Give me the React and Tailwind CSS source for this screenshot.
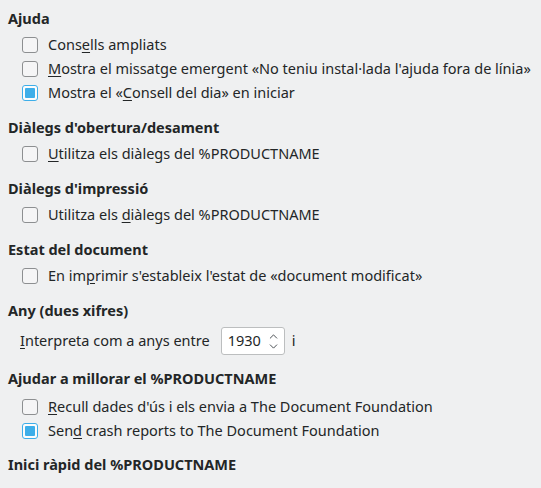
import { ChevronUp, ChevronDown } from "lucide-react";

const FONT = { fontFamily: '"Noto Sans", "DejaVu Sans", sans-serif' };

// label text with an optional underlined mnemonic letter
const Label = ({ text, u }) => {
  if (u == null) return <span>{text}</span>;
  return (
    <span>
      {text.slice(0, u)}
      <span className="underline underline-offset-2">{text[u]}</span>
      {text.slice(u + 1)}
    </span>
  );
};

const Check = ({ label, u, checked }) => (
  <div className="flex items-center h-6 pl-[14px]">
    {checked ? (
      <span className="flex items-center justify-center w-4 h-4 rounded-[3px] border border-[#3daee9] bg-[#fcfcfc]">
        <span className="w-[10px] h-[10px] rounded-[1px] bg-[#3daee9]" />
      </span>
    ) : (
      <span className="w-4 h-4 rounded-[3px] border border-[#8d8f91] bg-[#f5f5f6]" />
    )}
    <span className="ml-[10px]">
      <Label text={label} u={u} />
    </span>
  </div>
);

const Section = ({ title, children, className = "" }) => (
  <section className={`flex flex-col ${className}`}>
    <h2 className="h-5 leading-5 font-bold">{title}</h2>
    <div className="flex flex-col mt-[5px]">{children}</div>
  </section>
);

export default function App() {
  return (
    <div
      style={FONT}
      className="w-[541px] h-[488px] overflow-hidden bg-[#eff0f1] text-[#232627] text-[14.5px] px-2 pt-2 flex flex-col gap-3"
    >
      <Section title="Ajuda">
        <Check label="Consells ampliats" u={4} />
        <Check label="Mostra el missatge emergent «No teniu instal·lada l'ajuda fora de línia»" u={0} />
        <Check label="Mostra el «Consell del dia» en iniciar" checked u={11} />
      </Section>

      <Section title="Diàlegs d'obertura/desament">
        <Check label="Utilitza els diàlegs del %PRODUCTNAME" u={0} />
      </Section>

      <Section title="Diàlegs d'impressió">
        <Check label="Utilitza els diàlegs del %PRODUCTNAME" u={13} />
      </Section>

      <Section title="Estat del document">
        <Check label="En imprimir s'estableix l'estat de «document modificat»" u={5} />
      </Section>

      <section className="flex flex-col">
        <h2 className="h-5 leading-5 font-bold">Any (dues xifres)</h2>
        <div className="flex items-center mt-[7px] pl-3 h-7">
          <Label text="Interpreta com a anys entre" u={0} />
          <div className="ml-[11px] flex items-center w-16 h-7 rounded-[3px] border border-[#bcbebf] bg-white pl-[6px]">
            <span className="flex-1">1930</span>
            <span className="flex flex-col items-center mr-[4px] text-[#31363b]">
              <ChevronUp size={13} strokeWidth={1.6} className="-mb-[3px]" />
              <ChevronDown size={13} strokeWidth={1.6} />
            </span>
          </div>
          <span className="ml-[7px]">i</span>
        </div>
      </section>

      <Section title="Ajudar a millorar el %PRODUCTNAME" className="mt-[1px]">
        <div className="flex flex-col mt-[2px]">
          <Check label="Recull dades d'ús i els envia a The Document Foundation" u={0} />
          <Check label="Send crash reports to The Document Foundation" checked u={3} />
        </div>
      </Section>

      <section className="flex flex-col -mt-[1px]">
        <h2 className="h-5 leading-5 font-bold">Inici ràpid del %PRODUCTNAME</h2>
      </section>
    </div>
  );
}
